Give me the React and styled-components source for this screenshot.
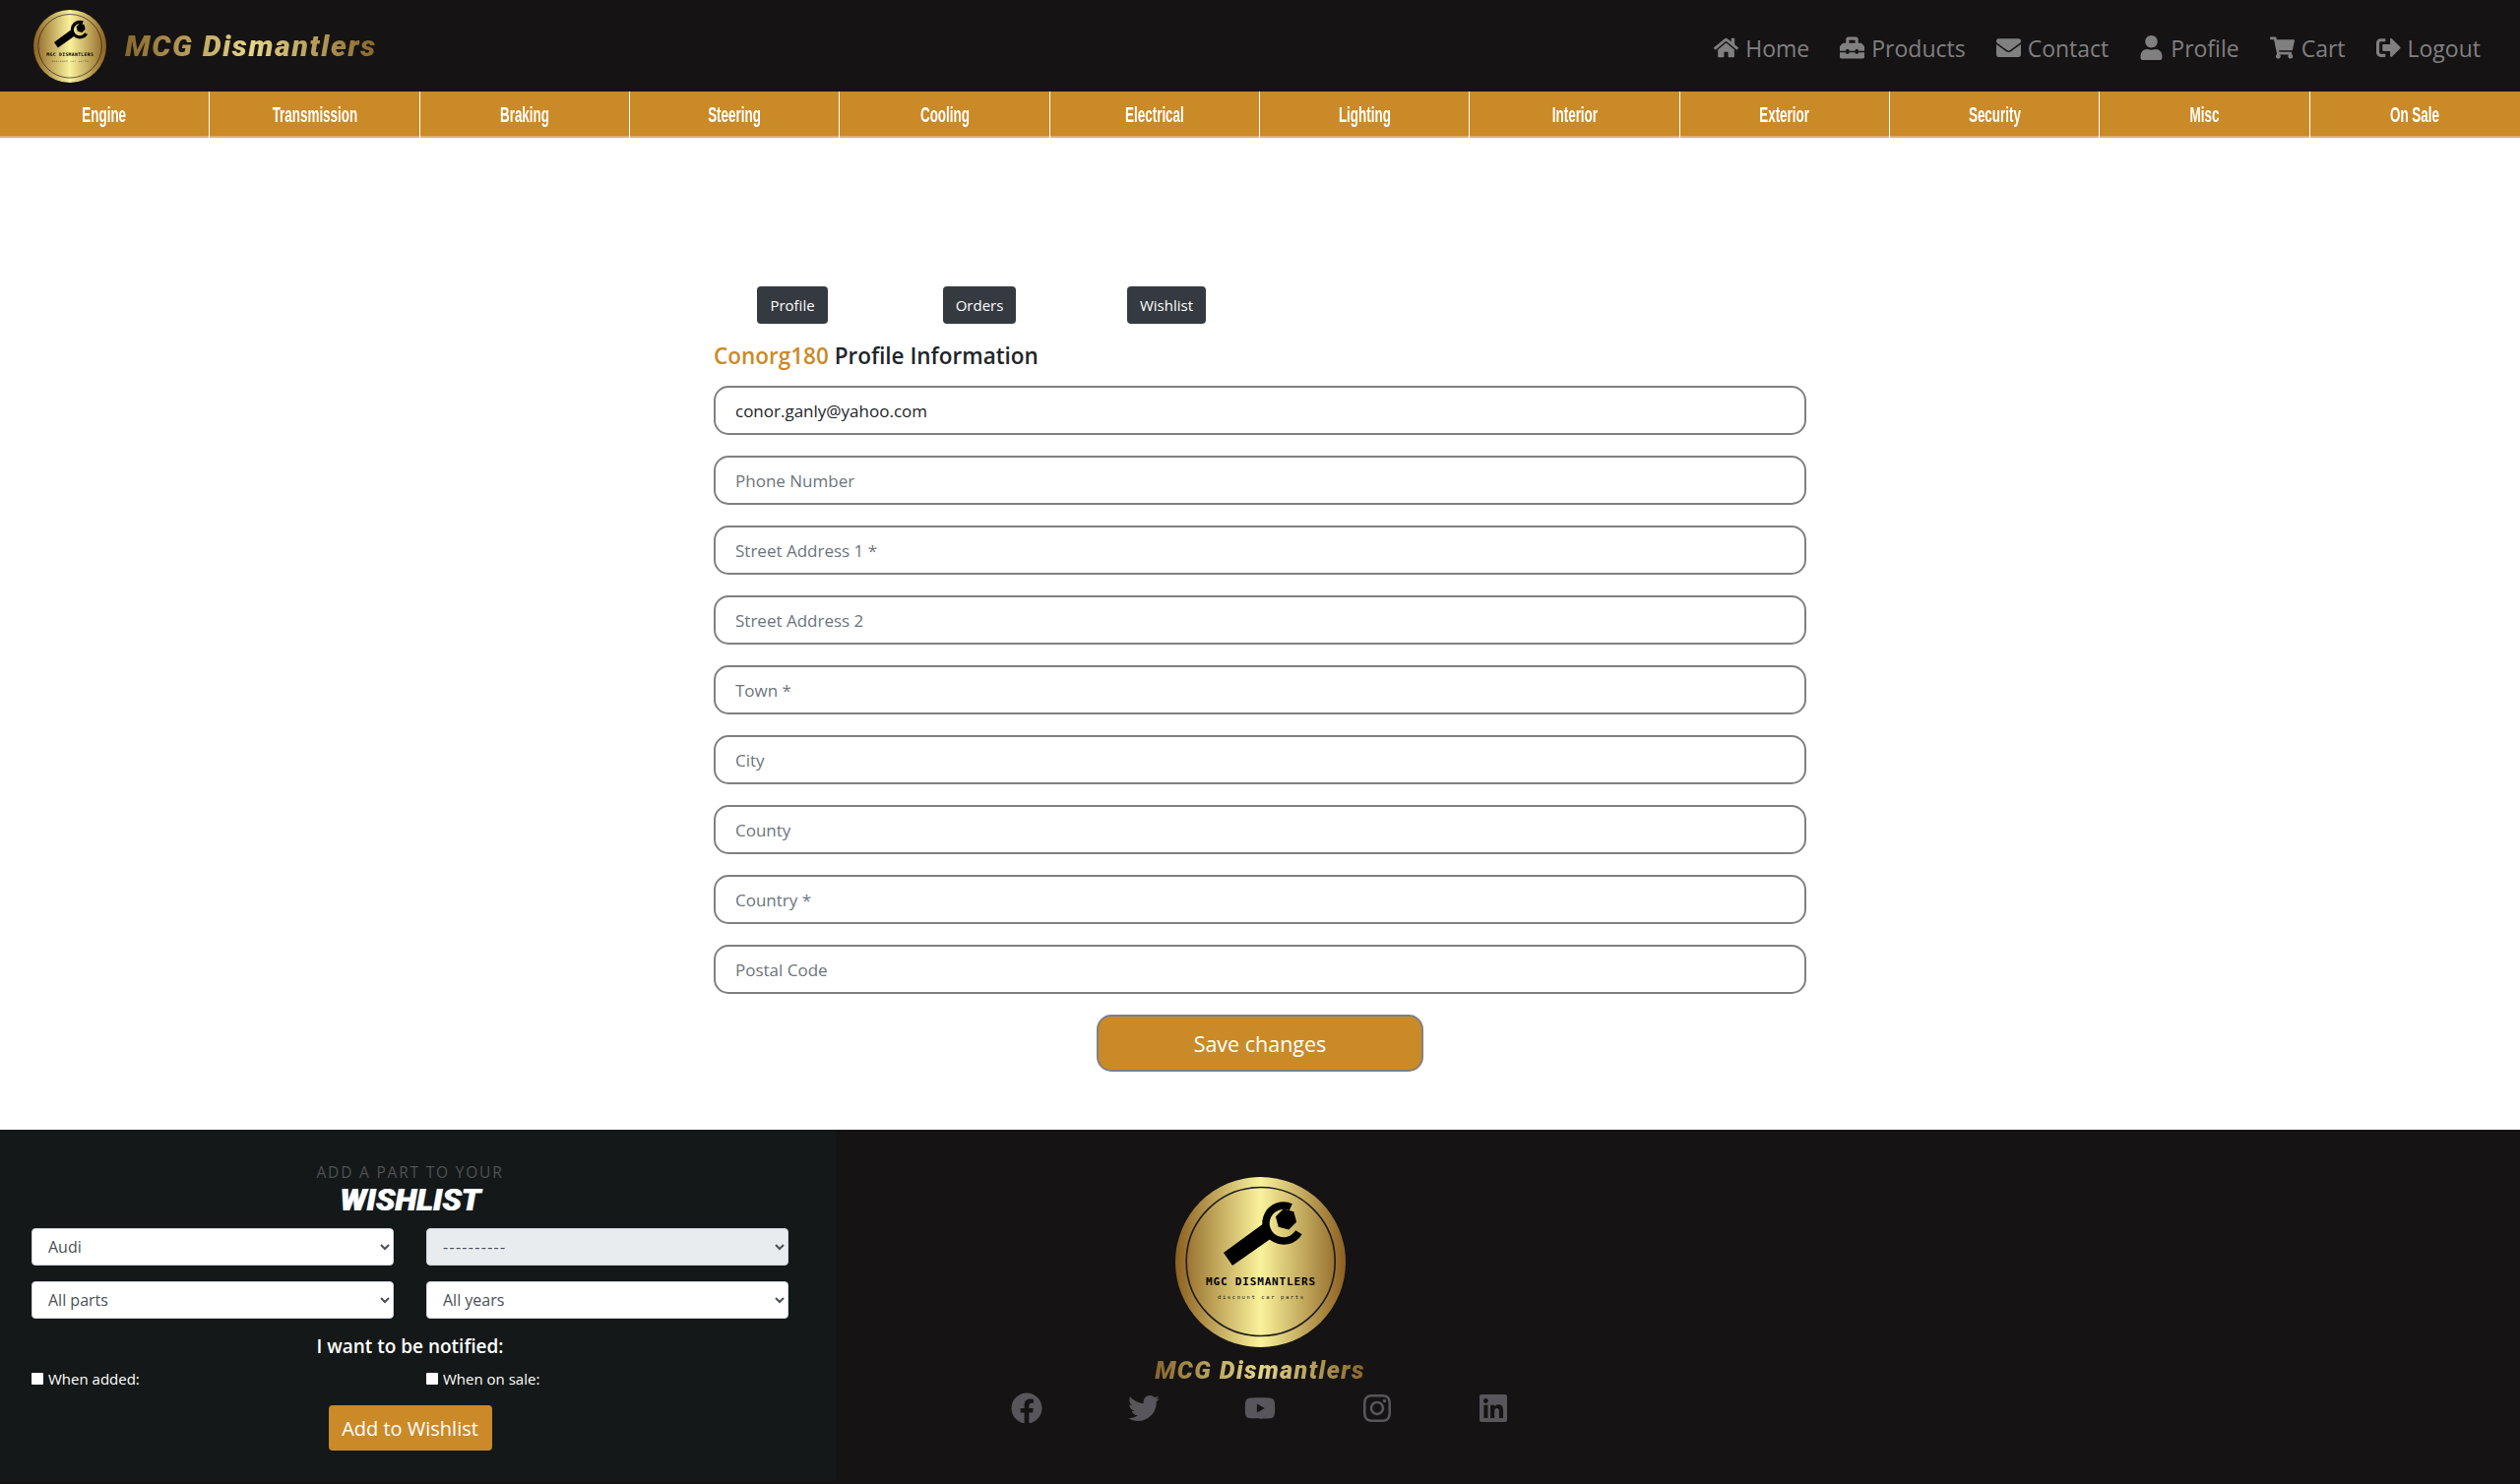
import React from "react";
import styled, { createGlobalStyle } from "styled-components";
import {
  FaHome,
  FaToolbox,
  FaEnvelope,
  FaUser,
  FaShoppingCart,
  FaSignOutAlt,
  FaFacebook,
  FaTwitter,
  FaYoutube,
  FaInstagram,
  FaLinkedin,
} from "react-icons/fa";

const GOLD = "#cb8a28";
const DARK = "#161314";
const UI_FONT = '"Open Sans", "Noto Sans", sans-serif';

const GlobalStyle = createGlobalStyle`
  * { box-sizing: border-box; }
  html, body { margin: 0; padding: 0; background: #fff; }
  body { font-family: ${UI_FONT}; color: #212529; }
`;

const menuLinks = [
  { label: "Home", icon: FaHome },
  { label: "Products", icon: FaToolbox },
  { label: "Contact", icon: FaEnvelope },
  { label: "Profile", icon: FaUser },
  { label: "Cart", icon: FaShoppingCart },
  { label: "Logout", icon: FaSignOutAlt },
];

const categories = [
  "Engine",
  "Transmission",
  "Braking",
  "Steering",
  "Cooling",
  "Electrical",
  "Lighting",
  "Interior",
  "Exterior",
  "Security",
  "Misc",
  "On Sale",
];

const fields = [
  { placeholder: "Email", value: "conor.ganly@yahoo.com" },
  { placeholder: "Phone Number" },
  { placeholder: "Street Address 1 *" },
  { placeholder: "Street Address 2" },
  { placeholder: "Town *" },
  { placeholder: "City" },
  { placeholder: "County" },
  { placeholder: "Country *" },
  { placeholder: "Postal Code" },
];

function LogoBadge({ id, size }) {
  return (
    <svg width={size} height={size} viewBox="0 0 173 173">
      <defs>
        <linearGradient id={id} x1="0" y1="0" x2="1" y2="0">
          <stop offset="0" stopColor="#8c6020" />
          <stop offset="0.5" stopColor="#f9f29b" />
          <stop offset="1" stopColor="#8c6020" />
        </linearGradient>
      </defs>
      <circle cx="86.5" cy="86.5" r="86.5" fill={`url(#${id})`} />
      <circle cx="86.7" cy="86" r="75.5" fill="none" stroke="#1d1b1c" strokeWidth="1.6" />
      <polygon points="49,77 90,47 98,62 58,90" fill="#000" />
      <path d="M117.3 30.6 A18 18 0 1 0 125.4 56.3" fill="none" stroke="#000" strokeWidth="7.5" />
      <polygon points="123.1,45.8 115.3,53.6 104.7,50.8 101.9,40.2 109.7,32.4 120.3,35.2" fill="#000" />
      <text x="86.5" y="110" textAnchor="middle" textLength="111" fontFamily="DejaVu Sans Mono, monospace" fontWeight="700" fontSize="11" fill="#000">
        MGC DISMANTLERS
      </text>
      <text x="86.5" y="124" textAnchor="middle" textLength="87" fontFamily="DejaVu Sans Mono, monospace" fontSize="5.5" fill="#222">
        discount car parts
      </text>
    </svg>
  );
}

export default function App() {
  return (
    <Page>
      <GlobalStyle />
      <TopBar>
        <Brand>
          <LogoBadge id="goldTop" size={74} />
          <BrandName>MCG Dismantlers</BrandName>
        </Brand>
        <Menu>
          {menuLinks.map(({ label, icon: Icon }) => (
            <MenuLink key={label}>
              <Icon />
              {label}
            </MenuLink>
          ))}
        </Menu>
      </TopBar>

      <CategoryBar>
        {categories.map((name) => (
          <CategoryCell key={name}>
            <CategoryLabel>{name}</CategoryLabel>
          </CategoryCell>
        ))}
      </CategoryBar>

      <Main>
        <Tabs>
          <TabCol>
            <TabButton>Profile</TabButton>
          </TabCol>
          <TabCol>
            <TabButton>Orders</TabButton>
          </TabCol>
          <TabCol>
            <TabButton>Wishlist</TabButton>
          </TabCol>
        </Tabs>
        <Heading>
          <em>Conorg180</em> Profile Information
        </Heading>
        <ProfileForm>
          {fields.map((f) => (
            <TextInput key={f.placeholder} placeholder={f.placeholder} defaultValue={f.value} />
          ))}
          <SaveButton type="button">Save changes</SaveButton>
        </ProfileForm>
      </Main>

      <Footer>
        <WishlistPanel>
          <Caption>ADD A PART TO YOUR</Caption>
          <WishlistTitle>WISHLIST</WishlistTitle>
          <SelectGrid>
            <PartSelect defaultValue="Audi">
              <option>Audi</option>
            </PartSelect>
            <PartSelect disabled defaultValue="----------">
              <option>----------</option>
            </PartSelect>
            <PartSelect defaultValue="All parts">
              <option>All parts</option>
            </PartSelect>
            <PartSelect defaultValue="All years">
              <option>All years</option>
            </PartSelect>
          </SelectGrid>
          <NotifyTitle>I want to be notified:</NotifyTitle>
          <CheckRow>
            <CheckLabel>
              <input type="checkbox" />
              When added:
            </CheckLabel>
            <CheckLabel>
              <input type="checkbox" />
              When on sale:
            </CheckLabel>
          </CheckRow>
          <AddButton type="button">Add to Wishlist</AddButton>
        </WishlistPanel>

        <FooterBrand>
          <LogoBadge id="goldFooter" size={173} />
          <FooterName>MCG Dismantlers</FooterName>
          <Socials>
            <FaFacebook />
            <FaTwitter />
            <FaYoutube />
            <FaInstagram />
            <FaLinkedin />
          </Socials>
        </FooterBrand>
      </Footer>
    </Page>
  );
}

const Page = styled.div`
  width: 100%;
  min-height: 1508px;
  display: flex;
  flex-direction: column;
`;

const TopBar = styled.header`
  height: 93px;
  background: ${DARK};
  display: flex;
  align-items: center;
  justify-content: space-between;
  padding: 0 40px 0 34px;
`;

const Brand = styled.div`
  display: flex;
  align-items: center;
  gap: 19px;
`;

const BrandName = styled.span`
  font-family: Roboto, sans-serif;
  font-style: italic;
  font-weight: 900;
  font-size: 30px;
  letter-spacing: 1.7px;
  background: linear-gradient(90deg, #86662c 0%, #e6d688 50%, #86662c 100%);
  -webkit-background-clip: text;
  background-clip: text;
  color: transparent;
`;

const Menu = styled.nav`
  display: flex;
  align-items: center;
  gap: 31px;
  padding-top: 4px;
`;

const MenuLink = styled.a`
  display: flex;
  align-items: center;
  gap: 7px;
  color: #808080;
  font-size: 23px;
  line-height: 32px;
  svg {
    width: auto;
    height: 25px;
  }
`;

const CategoryBar = styled.nav`
  height: 47px;
  background: ${GOLD};
  border-bottom: 2px solid #dcb06e;
  display: grid;
  grid-template-columns: repeat(12, 1fr);
`;

const CategoryCell = styled.div`
  display: flex;
  align-items: center;
  justify-content: center;
  border-right: 1px solid #fff;
  margin-bottom: -2px;
  &:last-child {
    border-right: none;
  }
`;

const CategoryLabel = styled.span`
  font-family: "Liberation Sans Narrow", "Liberation Sans", sans-serif;
  font-weight: 700;
  font-size: 22px;
  color: #fff;
  transform: scaleX(0.61);
`;

const Main = styled.main`
  width: 1110px;
  margin: 0 auto;
  padding: 151px 0 59px;
`;

const Tabs = styled.div`
  display: flex;
  margin: 0 -15px;
`;

const TabCol = styled.div`
  width: 190px;
  display: flex;
  justify-content: center;
`;

const TabButton = styled.button`
  height: 38px;
  padding: 0 13px;
  border: none;
  border-radius: 4px;
  background: #343a40;
  color: #fff;
  font-family: ${UI_FONT};
  font-size: 15px;
`;

const Heading = styled.h4`
  margin: 18px 0 16px;
  font-size: 22.5px;
  font-weight: 600;
  line-height: 29px;
  color: #212529;
  em {
    font-style: normal;
    color: ${GOLD};
  }
`;

const ProfileForm = styled.form`
  display: flex;
  flex-direction: column;
  align-items: center;
  gap: 21px;
`;

const TextInput = styled.input`
  width: 100%;
  height: 50px;
  padding: 0 20px;
  border: 2px solid #808080;
  border-radius: 15px;
  background: #fff;
  color: #212529;
  font-family: ${UI_FONT};
  font-size: 17px;
  outline: none;
  &::placeholder {
    color: #6c757d;
    opacity: 1;
  }
`;

const SaveButton = styled.button`
  width: 332px;
  height: 58px;
  border: 2px solid #808080;
  border-radius: 15px;
  background: ${GOLD};
  color: #fff;
  font-family: ${UI_FONT};
  font-size: 21.5px;
`;

const Footer = styled.footer`
  flex: 1;
  height: 361px;
  background: ${DARK};
  display: grid;
  grid-template-columns: 849px 862px 1fr;
`;

const WishlistPanel = styled.section`
  grid-column: 1;
  height: 357px;
  padding: 34px 48px 0 32px;
  background: #141818;
  display: flex;
  flex-direction: column;
  align-items: center;
`;

const Caption = styled.div`
  font-size: 15.5px;
  line-height: 19px;
  letter-spacing: 1.8px;
  color: #4f5252;
`;

const WishlistTitle = styled.div`
  font-family: Roboto, sans-serif;
  font-style: italic;
  font-weight: 900;
  font-size: 32px;
  line-height: 34px;
  margin-top: 1px;
  color: #fff;
  text-shadow: 1px 0 0 #cfe6ff;
`;

const SelectGrid = styled.div`
  width: 100%;
  margin-top: 12px;
  display: grid;
  grid-template-columns: 368px 368px;
  justify-content: space-between;
  gap: 16px 33px;
`;

const PartSelect = styled.select`
  height: 38px;
  padding: 0 12px;
  border: 1px solid #ced4da;
  border-radius: 4px;
  background-color: #fff;
  color: #495057;
  font-family: ${UI_FONT};
  font-size: 16px;
  &:disabled {
    background-color: #e9ecef;
    letter-spacing: 1.3px;
    opacity: 1;
  }
`;

const NotifyTitle = styled.div`
  margin-top: 14px;
  font-size: 19px;
  font-weight: 600;
  line-height: 28px;
  color: #fff;
`;

const CheckRow = styled.div`
  width: 100%;
  margin-top: 7px;
  display: grid;
  grid-template-columns: 368px 368px;
  justify-content: space-between;
`;

const CheckLabel = styled.label`
  display: flex;
  align-items: center;
  gap: 5px;
  color: #fff;
  font-size: 15px;
  line-height: 24px;
  input {
    appearance: none;
    width: 12px;
    height: 12px;
    margin: 0;
    background: #fff;
    border-radius: 1px;
  }
`;

const AddButton = styled.button`
  width: 166px;
  height: 46px;
  margin-top: 15px;
  border: none;
  border-radius: 4px;
  background: ${GOLD};
  color: #fff;
  font-family: ${UI_FONT};
  font-size: 20px;
`;

const FooterBrand = styled.section`
  grid-column: 2;
  padding-top: 48px;
  display: flex;
  flex-direction: column;
  align-items: center;
`;

const FooterName = styled(BrandName)`
  font-size: 25px;
  letter-spacing: 1.45px;
  line-height: 30px;
  margin-top: 9px;
`;

const Socials = styled.div`
  width: 506px;
  margin-top: 7px;
  display: flex;
  justify-content: space-between;
  color: #58565a;
  svg {
    display: block;
    width: auto;
    height: 32px;
  }
`;
